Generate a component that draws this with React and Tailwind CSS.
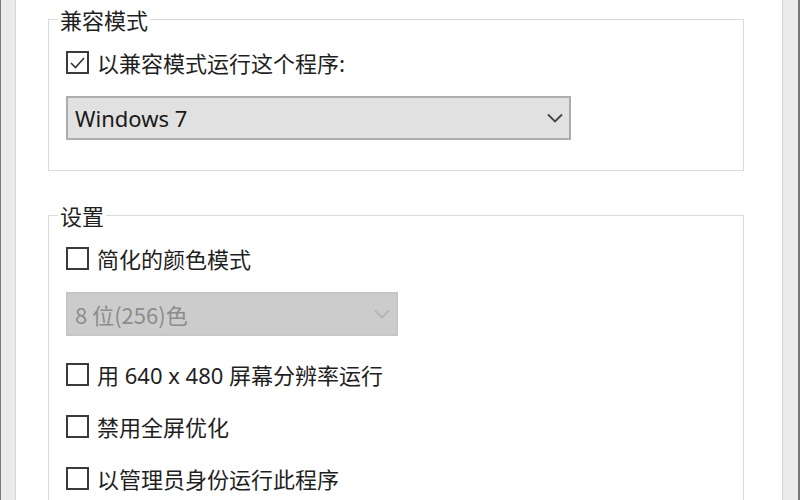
const cjk = "font-['Microsoft_YaHei','Noto_Sans_CJK_SC',sans-serif]"
const latin = "font-['Segoe_UI','Noto_Sans','Noto_Sans_CJK_SC',sans-serif]"

function Check({ checked }) {
  return (
    <span className="w-[23px] h-[23px] shrink-0 border-2 border-[#3a3a3a] bg-white flex items-center justify-center">
      {checked && (
        <svg width="19" height="19" viewBox="0 0 19 19">
          <path d="M3 10 L7.5 14.5 L16 5" fill="none" stroke="#333" strokeWidth="1.6" />
        </svg>
      )}
    </span>
  )
}

function Row({ label, checked, className = "" }) {
  return (
    <div className={`flex items-center h-[23px] gap-[8px] ${className}`}>
      <Check checked={checked} />
      <span className={`${cjk} text-[22px] leading-[23px] text-[#1f1f1f] whitespace-nowrap`}>{label}</span>
    </div>
  )
}

function Chevron({ color }) {
  return (
    <svg width="16" height="10" viewBox="0 0 16 10">
      <path d="M1 1.5 L8 8.5 L15 1.5" fill="none" stroke={color} strokeWidth="1.8" />
    </svg>
  )
}

export default function App() {
  return (
    <div className="w-[800px] h-[500px] overflow-hidden flex bg-white">
      <div className="w-[16px] h-full shrink-0 border-l border-r border-l-[#7a7a7a] border-r-[#d6d6d6] bg-[#ebebeb]" />

      <div className="flex-1 h-full bg-white pt-[8px]">
        <fieldset className="ml-[32px] w-[696px] border border-[#dadada] px-[9px] pt-[21px] pb-[30px]">
          <legend className={`${cjk} px-[2px] text-[22px] leading-[22px] text-[#1f1f1f]`}>兼容模式</legend>
          <div className="pl-[8px]">
            <Row label="以兼容模式运行这个程序:" checked />
            <div className="mt-[22px] w-[505px] h-[44px] border-2 border-[#adadad] bg-[#e1e1e1] flex items-center justify-between pl-[7px] pr-[6px]">
              <span className={`${latin} text-[22px] text-[#1a1a1a]`}>Windows 7</span>
              <Chevron color="#454545" />
            </div>
          </div>
        </fieldset>

        <fieldset className="mt-[33px] ml-[32px] w-[696px] border border-[#dadada] px-[9px] pt-[21px] pb-[30px]">
          <legend className={`${cjk} px-[2px] text-[22px] leading-[22px] text-[#1f1f1f]`}>设置</legend>
          <div className="pl-[8px]">
            <Row label="简化的颜色模式" />
            <div className="mt-[22px] w-[332px] h-[44px] border-2 border-[#c6c6c6] bg-[#cccccc] flex items-center justify-between pl-[7px] pr-[6px]">
              <span className={`${cjk} text-[22px] text-[#8c8c8c]`}>8 位(256)色</span>
              <Chevron color="#b4b4b4" />
            </div>
            <Row
              className="mt-[27px]"
              label={
                <>
                  用<span className={latin}> 640 x 480 </span>屏幕分辨率运行
                </>
              }
            />
            <Row className="mt-[29px]" label="禁用全屏优化" />
            <Row className="mt-[29px]" label="以管理员身份运行此程序" />
          </div>
        </fieldset>
      </div>

      <div className="w-[18px] h-full shrink-0 border-l border-r-2 border-l-[#d4d4d4] border-r-[#777777] bg-[#ececec]" />
    </div>
  )
}
